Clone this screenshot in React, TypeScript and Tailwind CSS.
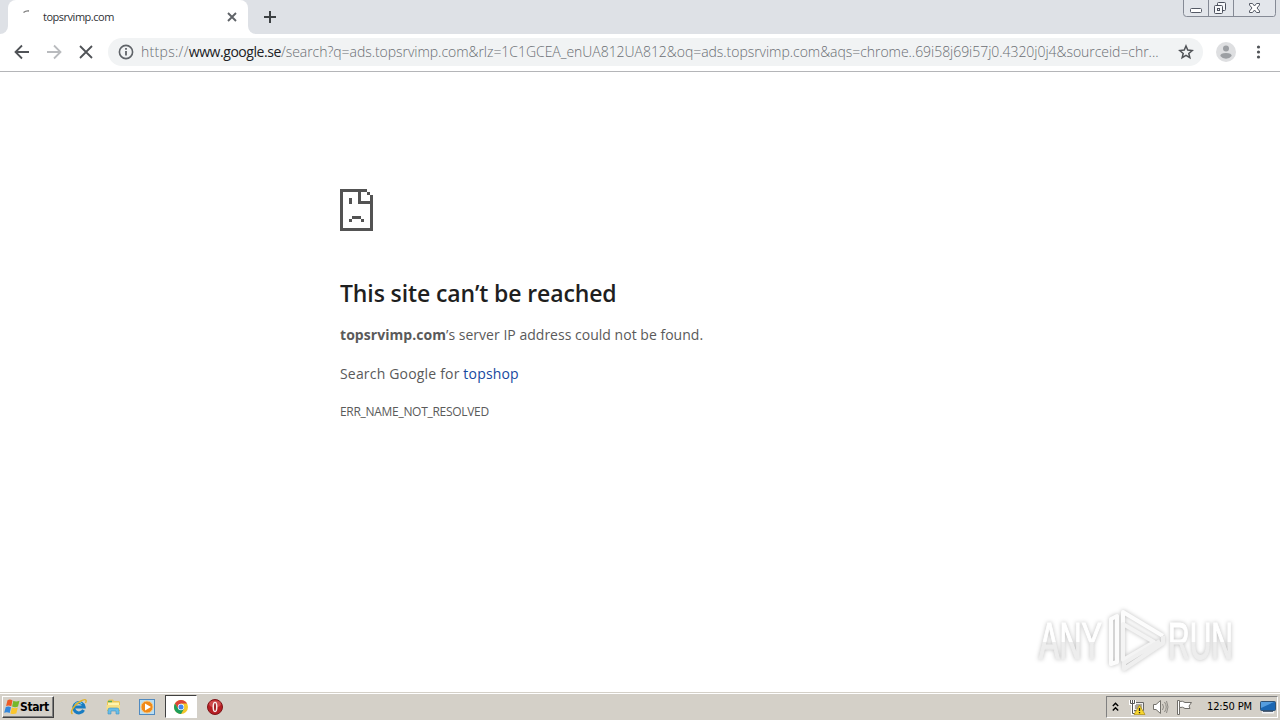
import type { ReactNode } from "react";
import { clsx } from "clsx";

const UI_FONT = "font-['Open_Sans','Noto_Sans',sans-serif]";
const TAHOMA = "font-['DejaVu_Sans_Condensed','DejaVu_Sans',sans-serif]";

function WindowControls() {
  return (
    <svg width="94" height="18" viewBox="0 0 94 18" fill="none" stroke="#858a95">
      <path d="M.5 0v13.500q0 3 3 3h87q2 0 2-3V0" fill="#e3e6eb" />
      <path d="M25.500 0v16M50.500 0v16" />
      <rect x="7.500" y="8.500" width="11" height="4" rx="1" fill="#fff" stroke="#555a66" />
      <g stroke="#4c515e" fill="#f7f8fa">
        <rect x="34.500" y="2.500" width="8" height="8" rx="1" />
        <rect x="31.500" y="5.500" width="8" height="8" rx="1" />
        <rect x="34.500" y="8.500" width="2" height="2" />
      </g>
      <path
        d="M66.500 3.500h3l2 2.500 2-2.500h3v1.500L74 8l2.500 3v1.500h-3l-2-2.500-2 2.500h-3V11L69 8l-2.500-3z"
        fill="#fff"
        stroke="#555a66"
      />
    </svg>
  );
}

function TabStrip() {
  return (
    <div className="flex h-[34px] items-start bg-[#dee1e6]">
      <div className="h-[34px] w-2 bg-white">
        <div className="h-full rounded-br-lg bg-[#dee1e6]" />
      </div>
      <div className="flex h-[34px] w-[240px] items-center rounded-t-lg bg-white pr-[10px] pl-[15px]">
        <svg width="16" height="16" viewBox="0 0 16 16" fill="none" stroke="#777" strokeWidth="1.300">
          <path d="M.5 3.500Q3 1.600 6 2" />
        </svg>
        <span className={clsx(UI_FONT, "ml-1 flex-1 text-[11px] leading-4 tracking-[-0.480px] text-[#303236]")}>
          topsrvimp.com
        </span>
        <svg width="12" height="12" viewBox="0 0 12 12" stroke="#5f6368" strokeWidth="1.900">
          <path d="M2 2l8 8M10 2l-8 8" />
        </svg>
      </div>
      <div className="h-[34px] w-2 bg-white">
        <div className="h-full rounded-bl-lg bg-[#dee1e6]" />
      </div>
      <svg className="mt-[11px] ml-2" width="12" height="12" viewBox="0 0 12 12" stroke="#3c4043" strokeWidth="2">
        <path d="M6 0v12M0 6h12" />
      </svg>
      <div className="mr-[3px] ml-auto">
        <WindowControls />
      </div>
    </div>
  );
}

function Toolbar() {
  return (
    <div className="flex h-[38px] items-center border-b border-[#b4b5b8] bg-white pb-px pl-[14px]">
      <svg width="80" height="16" viewBox="0 0 80 16" fill="none" stroke="#505357" strokeWidth="1.800">
        <path d="M15 8H2M8 1.500L1.500 8 8 14.500" />
        <path d="M33 8h13M40 1.500L46.500 8 40 14.500" stroke="#b9bbbe" />
        <path d="M66 2l12 12M78 2L66 14" />
      </svg>
      <div className="ml-[14px] flex h-7 w-[1095px] items-center rounded-full bg-[#f1f3f4] pr-[9px] pl-[10px]">
        <svg width="16" height="16" viewBox="0 0 16 16" fill="none" stroke="#5f6368" strokeWidth="1.600">
          <circle cx="8" cy="8" r="6.600" />
          <path d="M8 7v4.500M8 4v1.700" strokeWidth="1.800" />
        </svg>
        <div
          className={clsx(
            UI_FONT,
            "ml-[7px] flex-1 text-[14px] leading-7 font-light whitespace-nowrap text-[#6a6e73]"
          )}
        >
          <span className="tracking-[0.300px]">https://</span>
          <span className="font-normal tracking-[-0.440px] text-[#202124]">www.google.se</span>
          <span className="tracking-[-0.040px]">
            /search?q=ads.topsrvimp.com&amp;rlz=1C1GCEA_enUA812UA812&amp;oq=ads.topsrvimp.com&amp;aqs=chrome..69i58j69i57j0.4320j0j4&amp;sourceid=chr...
          </span>
        </div>
        <svg width="16" height="16" viewBox="0 0 16 16" fill="none" stroke="#505357" strokeWidth="1.500">
          <path d="M8 2l1.750 4.100 4.450.4-3.400 2.900 1.050 4.350L8 11.400l-3.850 2.350L5.200 9.400 1.800 6.500l4.450-.4z" />
        </svg>
      </div>
      <svg className="ml-[13px]" width="20" height="20" viewBox="0 0 20 20" fill="#9c9fa3">
        <circle cx="10" cy="10" r="10" fill="#dedfe1" />
        <circle cx="10" cy="6.500" r="3" />
        <path d="M4.300 14q0-3 5.700-3t5.700 3q-2.300 2.800-5.700 2.800T4.300 14z" />
      </svg>
      <svg className="ml-5" width="5" height="16" viewBox="0 0 5 16" fill="#505357">
        <circle cx="2.500" cy="3" r="1.600" />
        <circle cx="2.500" cy="8" r="1.600" />
        <circle cx="2.500" cy="13" r="1.600" />
      </svg>
    </div>
  );
}

// Drawn on an 11x14 grid, one cell is 3px
function SadPage() {
  return (
    <svg width="33" height="42" viewBox="0 0 11 14" fill="#535353" shapeRendering="crispEdges">
      <path d="M0 0h9v1H7v3h3v9h1v1H0zM1 1v12h9V5H6V1z" fillRule="evenodd" />
      <path d="M6 0h1v5H6zM6 4h5v1H6zM9 1h1v1H9zM10 2h1v12h-1z" />
      <path d="M3 3h1v2H3zM4 9h3v1H4zM3 10h1v1H3zM7 10h1v1H7z" />
    </svg>
  );
}

function ErrorPage() {
  return (
    <main className={clsx(UI_FONT, "h-[400px] pt-[117px] pl-[340px] text-[#5a5a5a]")}>
      <SadPage />
      <h1 className="mt-[46px] text-[23px] leading-8 font-semibold tracking-[-0.120px] whitespace-nowrap text-[#1f1f1f]">
        This site can’t be reached
      </h1>
      <p className="mt-[14px] text-[14px] leading-6">
        <strong className="font-bold tracking-[0.050px]">topsrvimp.com</strong>
        <span className="tracking-[0.020px]">’s server IP address could not be found.</span>
      </p>
      <p className="mt-[15px] text-[14px] leading-6 tracking-[0.180px]">
        Search Google for <a className="text-[#1648a0]">topshop</a>
      </p>
      <p className="mt-[16px] text-[12px] leading-5 tracking-[-0.300px]">ERR_NAME_NOT_RESOLVED</p>
    </main>
  );
}

function Watermark() {
  return (
    <svg
      className="absolute top-[600px] left-[1026px] drop-shadow-[0_0_2px_rgba(0,0,0,0.26)]"
      width="254"
      height="80"
      viewBox="0 0 254 80"
    >
      <defs>
        <linearGradient id="fade" x1="0" y1="0" x2="0" y2="80" gradientUnits="userSpaceOnUse">
          <stop offset=".52" stopColor="#fff" />
          <stop offset=".52" stopColor="#ededed" />
        </linearGradient>
      </defs>
      <g
        fill="url(#fade)"
        stroke="url(#fade)"
        strokeWidth="1.200"
        fontFamily="Liberation Sans, sans-serif"
        fontSize="51"
      >
        <text x="13" y="59" textLength="63" lengthAdjust="spacingAndGlyphs">ANY</text>
        <text x="142" y="59" textLength="65" lengthAdjust="spacingAndGlyphs">RUN</text>
      </g>
      <g fill="none" stroke="#fcfcfc" strokeWidth="4" strokeLinejoin="round">
        <path d="M85 64V19l6-3v46z" />
        <path d="M97 55V12l40 24" />
        <path d="M97 24l31 18-31 18z" stroke="#f4f4f4" />
        <path d="M137 36v7L98 69v-6l36-22" stroke="#efefef" />
      </g>
    </svg>
  );
}

function WindowsFlag() {
  return (
    <svg width="16" height="16" viewBox="0 0 16 16">
      <path d="M3.500 1.200q2.500-1.300 5 .2L7.300 7.200Q4.500 6 2.100 7z" fill="#ed5b25" />
      <path d="M9.300 1.800q2.700 1.200 6.200 0l-1.500 5.800q-3 1.100-5.900-.1z" fill="#75b82b" />
      <path d="M1.800 8q2.700-1 5.200.2l-1.300 5.800Q3 12.800.2 13.800z" fill="#3387dc" />
      <path d="M7.900 8.500q2.800 1.200 5.900.1l-1.500 5.900q-3 1-5.900-.1z" fill="#fbc62d" />
    </svg>
  );
}

function ExplorerIcon() {
  return (
    <svg width="18" height="18" viewBox="0 0 18 18" fill="none">
      <path d="M13.600 12a5.200 5.200 0 1 1 .5-3H5" stroke="#187cc2" strokeWidth="3" />
      <path d="M5 7a4 4 0 0 1 7-1" stroke="#75d0f3" strokeWidth="1.200" />
      <path d="M2.500 16C-.5 14 4 7 10 3.500S17 2 15.500 5" stroke="#dfb22c" strokeWidth="1.500" />
    </svg>
  );
}

function FolderIcon() {
  return (
    <svg width="17" height="17" viewBox="0 0 17 17">
      <path d="M2 3.500L4 1.500h4l1 1.500h5l1 1v9H2z" fill="#ecc655" />
      <path d="M3 4.500h11v7H3z" fill="#fff4ae" />
      <path d="M3 3.500h4" stroke="#55a95b" strokeWidth="1.500" />
      <path d="M1.500 7h13.500v5H1.500z" fill="#f7df83" />
      <path d="M3 16v-4q0-2 2-2h7q2 0 2 2v4h-3v-3H6v3z" fill="#68bde8" stroke="#3b94c2" strokeWidth=".6" />
    </svg>
  );
}

function MediaIcon() {
  return (
    <svg width="16" height="16" viewBox="0 0 16 16">
      <rect x=".5" y=".5" width="15" height="15" fill="#b9def3" stroke="#508ac0" />
      <circle cx="8" cy="8" r="6" fill="#f08a18" stroke="#fbc77e" />
      <path d="M6 4.500v7L12 8z" fill="#fff" />
    </svg>
  );
}

function ChromeIcon() {
  return (
    <svg width="14" height="14" viewBox="0 0 14 14">
      <circle cx="7" cy="7" r="7" fill="#f3c72b" />
      <path d="M.95 3.500A7 7 0 0 1 13.050 3.500H7L4 8.500z" fill="#dc4437" />
      <path d="M.95 3.500A7 7 0 0 0 7 14l3-5.200-6-.3z" fill="#1d9d5b" />
      <circle cx="7" cy="7" r="3.200" fill="#fff" />
      <circle cx="7" cy="7" r="2.500" fill="#4385ed" />
    </svg>
  );
}

function OperaIcon() {
  return (
    <svg width="16" height="16" viewBox="0 0 16 16">
      <circle cx="8" cy="8" r="7.500" fill="#b71e23" stroke="#7d1519" />
      <ellipse cx="8" cy="5" rx="6" ry="3.500" fill="#cf4a4d" />
      <ellipse cx="8" cy="8" rx="2.500" ry="5.200" fill="#f7eeee" />
      <ellipse cx="8" cy="8" rx="1" ry="4" fill="#9f1b20" />
    </svg>
  );
}

function TaskButton({ active, children }: { active?: boolean; children: ReactNode }) {
  return (
    <div
      className={clsx(
        "flex h-[23px] w-8 items-center justify-center",
        active && "border border-t-[#404040] border-r-white border-b-white border-l-[#404040] bg-white"
      )}
    >
      {children}
    </div>
  );
}

function Tray() {
  return (
    <div className="mr-[2px] ml-auto flex h-[22px] w-[172px] items-center border border-t-[#808080] border-r-white border-b-white border-l-[#808080]">
      <svg className="ml-[5px]" width="7" height="10" viewBox="0 0 7 10" fill="none" stroke="#000" strokeWidth="1.400">
        <path d="M.8 4l2.700-2.700L6.200 4M.8 8.500l2.700-2.700 2.700 2.700" />
      </svg>
      <svg className="ml-[10px]" width="17" height="16" viewBox="0 0 17 16" fill="none">
        <path d="M4.500 3.500h10v8h-10z" fill="#eee" stroke="#666" />
        <path d="M6 5h7v5H6z" fill="#aaa69e" />
        <path d="M1.500 1v3.500h4V1M3.500 5v9.500H9" stroke="#fff" strokeWidth="3" />
        <path d="M1.500 1v3.500h4V1M3.500 1v13.500H8" stroke="#555" />
        <path d="M10.500 6L16 15.500H5z" fill="#f7d62d" stroke="#a98a12" strokeWidth=".7" />
        <path d="M10.500 9v3M10.500 13v1.300" stroke="#222" strokeWidth="1.300" />
      </svg>
      <svg className="ml-[6px]" width="17" height="16" viewBox="0 0 17 16" fill="none" stroke="#73716b">
        <path d="M1.500 5.500H4L8.500 1.500v13L4 10.500H1.500z" fill="#fff" />
        <path d="M10.500 5q2 3 0 6M12.500 3q3.500 5 0 10M14.500 2q3 6 0 12" stroke="#8d8a84" />
      </svg>
      <svg className="ml-[7px]" width="17" height="16" viewBox="0 0 17 16" stroke="#706e69">
        <path d="M1.500 1.500h2v14h-2z" fill="#fff" />
        <path d="M3.500 2.500q3-1 5.500 1h6.500L13 7l1 2.500H9q-2-2-5.500-1z" fill="#fff" />
      </svg>
      <span className={clsx(TAHOMA, "ml-[14px] w-[50px] text-[11px] leading-4 tracking-[-0.150px] whitespace-nowrap text-black")}>
        12:50 PM
      </span>
      <svg className="ml-[3px]" width="16" height="14" viewBox="0 0 16 14">
        <rect x=".5" y="1.500" width="15" height="9" rx="1" fill="#1b67b3" stroke="#305274" />
        <path d="M1 2h13L1 8z" fill="#559dde" />
        <path d="M2 12.500h12" stroke="#f1f3f6" strokeWidth="2" />
        <path d="M3 11.500h10" stroke="#536378" />
      </svg>
    </div>
  );
}

function Taskbar() {
  return (
    <div className="flex h-7 items-center border-t border-[#d4d0c8] bg-[#d4d0c8] shadow-[inset_0_1px_0_#fff]">
      <div
        className={clsx(
          TAHOMA,
          "ml-[2px] flex h-[22px] w-[52px] items-center border border-t-white border-r-[#404040] border-b-[#404040] border-l-white pl-px text-[12px] font-bold tracking-[-0.380px] text-black shadow-[inset_-1px_-1px_0_#808080]"
        )}
      >
        <WindowsFlag />
        Start
      </div>
      <div className="ml-[9px] flex gap-[2px]">
        <TaskButton>
          <ExplorerIcon />
        </TaskButton>
        <TaskButton>
          <FolderIcon />
        </TaskButton>
        <TaskButton>
          <MediaIcon />
        </TaskButton>
        <TaskButton active>
          <ChromeIcon />
        </TaskButton>
        <TaskButton>
          <OperaIcon />
        </TaskButton>
      </div>
      <Tray />
    </div>
  );
}

export default function App() {
  return (
    <div className="relative flex h-[720px] w-[1280px] flex-col overflow-hidden bg-white">
      <TabStrip />
      <Toolbar />
      <div className="flex-1">
        <ErrorPage />
      </div>
      <Taskbar />
      <Watermark />
    </div>
  );
}
